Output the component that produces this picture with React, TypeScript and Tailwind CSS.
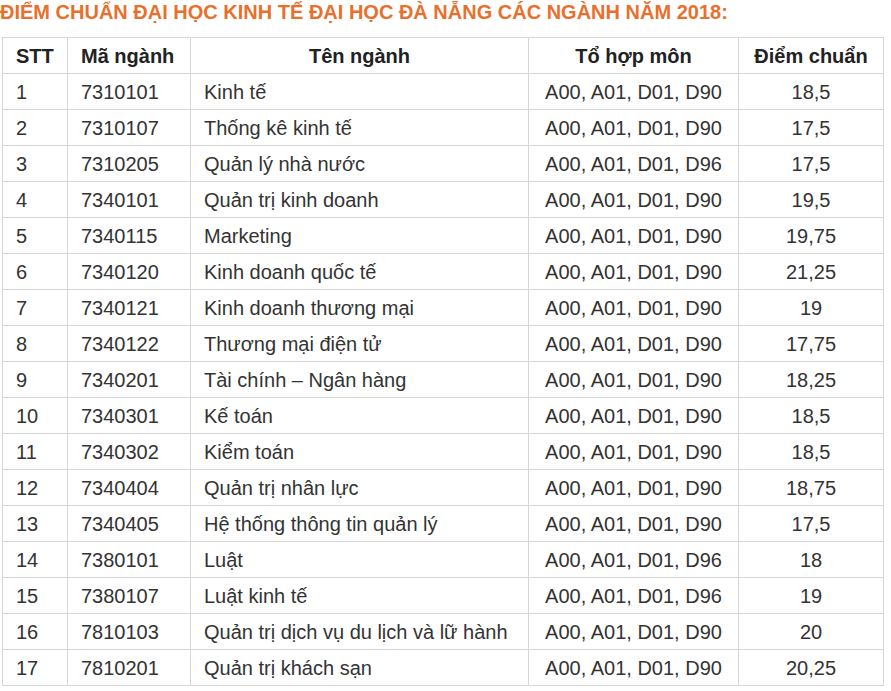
const rows: [string, string, string, string, string][] = [
  ["1", "7310101", "Kinh tế", "A00, A01, D01, D90", "18,5"],
  ["2", "7310107", "Thống kê kinh tế", "A00, A01, D01, D90", "17,5"],
  ["3", "7310205", "Quản lý nhà nước", "A00, A01, D01, D96", "17,5"],
  ["4", "7340101", "Quản trị kinh doanh", "A00, A01, D01, D90", "19,5"],
  ["5", "7340115", "Marketing", "A00, A01, D01, D90", "19,75"],
  ["6", "7340120", "Kinh doanh quốc tế", "A00, A01, D01, D90", "21,25"],
  ["7", "7340121", "Kinh doanh thương mại", "A00, A01, D01, D90", "19"],
  ["8", "7340122", "Thương mại điện tử", "A00, A01, D01, D90", "17,75"],
  ["9", "7340201", "Tài chính – Ngân hàng", "A00, A01, D01, D90", "18,25"],
  ["10", "7340301", "Kế toán", "A00, A01, D01, D90", "18,5"],
  ["11", "7340302", "Kiểm toán", "A00, A01, D01, D90", "18,5"],
  ["12", "7340404", "Quản trị nhân lực", "A00, A01, D01, D90", "18,75"],
  ["13", "7340405", "Hệ thống thông tin quản lý", "A00, A01, D01, D90", "17,5"],
  ["14", "7380101", "Luật", "A00, A01, D01, D96", "18"],
  ["15", "7380107", "Luật kinh tế", "A00, A01, D01, D96", "19"],
  ["16", "7810103", "Quản trị dịch vụ du lịch và lữ hành", "A00, A01, D01, D90", "20"],
  ["17", "7810201", "Quản trị khách sạn", "A00, A01, D01, D90", "20,25"],
];

const cell = "border border-[#d6d6d6] h-[36px] px-[13px] py-0";

export default function App() {
  return (
    <div className="bg-white w-[891px] h-[691px] font-['Liberation_Sans',Arial,sans-serif]">
      <h2 className="pt-px text-[20px] leading-[23px] font-bold text-[#ea6f2c] m-0">
        ĐIỂM CHUẨN ĐẠI HỌC KINH TẾ ĐẠI HỌC ĐÀ NẴNG CÁC NGÀNH NĂM 2018:
      </h2>
      <table className="mt-[13px] ml-[2px] w-[881px] table-fixed border-collapse text-[20px] text-[#333]">
        <colgroup>
          <col className="w-[65px]" />
          <col className="w-[123px]" />
          <col className="w-[338px]" />
          <col className="w-[210px]" />
          <col className="w-[145px]" />
        </colgroup>
        <thead>
          <tr className="font-bold text-[#222]">
            <th className={`${cell} text-left`}>STT</th>
            <th className={`${cell} text-left`}>Mã ngành</th>
            <th className={`${cell} text-center`}>Tên ngành</th>
            <th className={`${cell} text-center`}>Tổ hợp môn</th>
            <th className={`${cell} text-center`}>Điểm chuẩn</th>
          </tr>
        </thead>
        <tbody>
          {rows.map((r) => (
            <tr key={r[0]}>
              <td className={`${cell} text-left`}>{r[0]}</td>
              <td className={`${cell} text-left`}>{r[1]}</td>
              <td className={`${cell} text-left`}>{r[2]}</td>
              <td className={`${cell} text-center`}>{r[3]}</td>
              <td className={`${cell} text-center`}>{r[4]}</td>
            </tr>
          ))}
        </tbody>
      </table>
    </div>
  );
}
